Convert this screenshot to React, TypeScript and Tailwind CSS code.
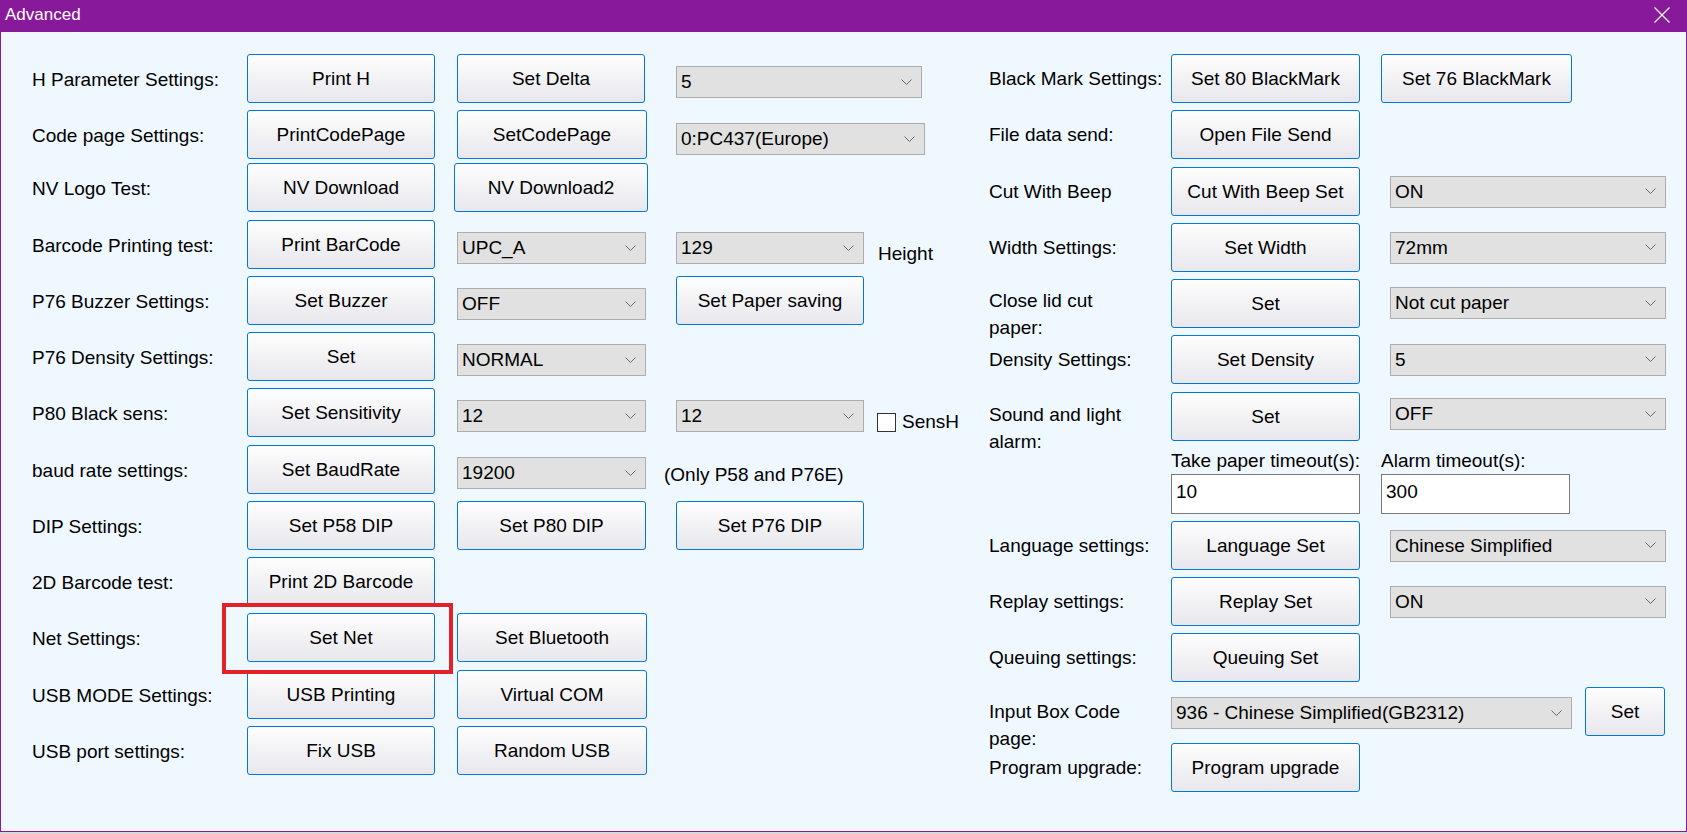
import React from "react";

const btnBase =
  "flex shrink-0 items-center justify-center h-[49px] pt-[2px] rounded-[3px] border border-[#0078d7] bg-linear-to-b from-[#fefefe] to-[#e7e7ed] text-black whitespace-nowrap";

function Btn({ label, w = "w-[188px]", className = "" }: { label: string; w?: string; className?: string }) {
  return (
    <button type="button" className={`${btnBase} ${w} ${className}`}>
      {label}
    </button>
  );
}

function Chevron() {
  return (
    <svg width="11" height="7" viewBox="0 0 11 7" className="shrink-0">
      <polyline points="0.5,0.5 5.5,5.5 10.5,0.5" fill="none" stroke="#6a6a6a" strokeWidth="1" />
    </svg>
  );
}

function Combo({ value, w, className = "" }: { value: string; w: string; className?: string }) {
  return (
    <div
      className={`flex h-[32px] shrink-0 items-center justify-between border border-[#adadad] bg-[#e1e1e1] pl-[4px] pr-[9px] ${w} ${className}`}
    >
      <span className="whitespace-nowrap pt-[1px]">{value}</span>
      <Chevron />
    </div>
  );
}

function TextBox({ value }: { value: string }) {
  return (
    <div className="flex h-[40px] w-[189px] shrink-0 items-start border border-[#7a7a7a] bg-white pl-[4px] pt-[3px]">
      {value}
    </div>
  );
}

/* ---------- left settings column ---------- */

function LRow({
  label,
  c1,
  c2,
  c3,
  c3Class = "ml-[29px]",
  className = "",
}: {
  label: string;
  c1?: React.ReactNode;
  c2?: React.ReactNode;
  c3?: React.ReactNode;
  c3Class?: string;
  className?: string;
}) {
  return (
    <div className={`flex h-[49px] items-center ${className}`}>
      <div className="w-[215px] shrink-0 whitespace-nowrap pt-[4px]">{label}</div>
      <div className="flex w-[188px] shrink-0 items-center">{c1}</div>
      <div className="ml-[22px] flex w-[190px] shrink-0 items-center">{c2}</div>
      {c3 && <div className={`flex items-center ${c3Class}`}>{c3}</div>}
    </div>
  );
}

function LeftPanel() {
  return (
    <div className="flex w-[988px] shrink-0 flex-col gap-[7px] pl-[31px] pt-[22px]">
      <LRow
        label="H Parameter Settings:"
        c1={<Btn label="Print H" />}
        c2={<Btn label="Set Delta" w="w-[188px]" />}
        c3={<Combo value="5" w="w-[246px]" className="mt-[7px]" />}
      />
      <LRow
        label="Code page Settings:"
        c1={<Btn label="PrintCodePage" />}
        c2={<Btn label="SetCodePage" w="w-[190px]" />}
        c3={<Combo value="0:PC437(Europe)" w="w-[249px]" className="mt-[9px]" />}
      />
      <LRow
        className="-mt-[3px]"
        label="NV Logo Test:"
        c1={<Btn label="NV Download" />}
        c2={<Btn label="NV Download2" w="w-[194px]" className="-ml-[3px]" />}
      />
      <LRow
        className="mt-[1px]"
        label="Barcode Printing test:"
        c1={<Btn label="Print BarCode" />}
        c2={<Combo value="UPC_A" w="w-[189px]" className="mt-[7px]" />}
        c3={
          <>
            <Combo value="129" w="w-[188px]" className="mt-[7px]" />
            <span className="ml-[14px] pt-[19px]">Height</span>
          </>
        }
      />
      <LRow
        label="P76 Buzzer Settings:"
        c1={<Btn label="Set Buzzer" />}
        c2={<Combo value="OFF" w="w-[189px]" className="mt-[7px]" />}
        c3={<Btn label="Set Paper saving" w="w-[188px]" />}
      />
      <LRow
        label="P76 Density Settings:"
        c1={<Btn label="Set" />}
        c2={<Combo value="NORMAL" w="w-[189px]" className="mt-[7px]" />}
      />
      <LRow
        label="P80 Black sens:"
        c1={<Btn label="Set Sensitivity" />}
        c2={<Combo value="12" w="w-[189px]" className="mt-[7px]" />}
        c3={
          <>
            <Combo value="12" w="w-[188px]" className="mt-[7px]" />
            <span className="ml-[13px] mt-[20px] h-[19px] w-[19px] shrink-0 border border-[#333333] bg-white" />
            <span className="ml-[6px] mt-[20px] whitespace-nowrap">SensH</span>
          </>
        }
      />
      <LRow
        className="mt-[1px]"
        label="baud rate settings:"
        c1={<Btn label="Set BaudRate" />}
        c2={<Combo value="19200" w="w-[189px]" className="mt-[7px]" />}
        c3={<span className="whitespace-nowrap pt-[12px]">(Only P58 and P76E)</span>}
        c3Class="ml-[17px]"
      />
      <LRow
        label="DIP Settings:"
        c1={<Btn label="Set P58 DIP" />}
        c2={<Btn label="Set P80 DIP" w="w-[189px]" />}
        c3={<Btn label="Set P76 DIP" w="w-[188px]" />}
      />
      <LRow label="2D Barcode test:" c1={<Btn label="Print 2D Barcode" />} />
      <LRow
        label="Net Settings:"
        c1={
          <div className="relative">
            <Btn label="Set Net" />
            <div className="pointer-events-none absolute -bottom-[12px] -left-[25px] -right-[18px] -top-[10px] border-4 border-[#e3212b]" />
          </div>
        }
        c2={<Btn label="Set Bluetooth" w="w-[190px]" />}
      />
      <LRow
        className="mt-[1px]"
        label="USB MODE Settings:"
        c1={<Btn label="USB Printing" />}
        c2={<Btn label="Virtual COM" w="w-[190px]" />}
      />
      <LRow label="USB port settings:" c1={<Btn label="Fix USB" />} c2={<Btn label="Random USB" w="w-[190px]" />} />
    </div>
  );
}

/* ---------- right settings column ---------- */

function RRow({
  label,
  children,
  twoLine = false,
  labelPad = "pt-[9px]",
  className = "",
}: {
  label: React.ReactNode;
  children?: React.ReactNode;
  twoLine?: boolean;
  labelPad?: string;
  className?: string;
}) {
  return (
    <div className={`flex h-[49px] ${twoLine ? "items-start" : "items-center"} ${className}`}>
      <div className={`w-[182px] shrink-0 whitespace-nowrap ${twoLine ? `${labelPad} leading-[27px]` : "pt-[2px]"}`}>
        {label}
      </div>
      {children}
    </div>
  );
}

function RightPanel() {
  return (
    <div className="flex flex-1 flex-col gap-[7px] pt-[22px]">
      <RRow label="Black Mark Settings:">
        <Btn label="Set 80 BlackMark" w="w-[189px]" />
        <Btn label="Set 76 BlackMark" w="w-[191px]" className="ml-[21px]" />
      </RRow>
      <RRow label="File data send:">
        <Btn label="Open File Send" w="w-[189px]" />
      </RRow>
      <RRow label="Cut With Beep" className="mt-[1px]">
        <Btn label="Cut With Beep Set" w="w-[189px]" />
        <Combo value="ON" w="w-[276px]" className="ml-[30px]" />
      </RRow>
      <RRow label="Width Settings:">
        <Btn label="Set Width" w="w-[189px]" />
        <Combo value="72mm" w="w-[276px]" className="ml-[30px]" />
      </RRow>
      <RRow
        twoLine
        labelPad="pt-[8px]"
        label={
          <>
            Close lid cut
            <br />
            paper:
          </>
        }
      >
        <Btn label="Set" w="w-[189px]" />
        <Combo value="Not cut paper" w="w-[276px]" className="ml-[30px] mt-[8px]" />
      </RRow>
      <RRow label="Density Settings:">
        <Btn label="Set Density" w="w-[189px]" />
        <Combo value="5" w="w-[276px]" className="ml-[30px]" />
      </RRow>
      <RRow
        twoLine
        className="mt-[1px]"
        labelPad="pt-[9px]"
        label={
          <>
            Sound and light
            <br />
            alarm:
          </>
        }
      >
        <Btn label="Set" w="w-[189px]" />
        <Combo value="OFF" w="w-[276px]" className="ml-[30px] mt-[6px]" />
      </RRow>

      {/* timeout inputs */}
      <div className="flex pl-[182px]">
        <div className="flex w-[189px] shrink-0 flex-col">
          <span className="whitespace-nowrap leading-[26px]">Take paper timeout(s):</span>
          <TextBox value="10" />
        </div>
        <div className="ml-[21px] flex flex-col">
          <span className="whitespace-nowrap leading-[26px]">Alarm timeout(s):</span>
          <TextBox value="300" />
        </div>
      </div>

      <RRow label="Language settings:">
        <Btn label="Language Set" w="w-[189px]" />
        <Combo value="Chinese Simplified" w="w-[276px]" className="ml-[30px]" />
      </RRow>
      <RRow label="Replay settings:">
        <Btn label="Replay Set" w="w-[189px]" />
        <Combo value="ON" w="w-[276px]" className="ml-[30px]" />
      </RRow>
      <RRow label="Queuing settings:">
        <Btn label="Queuing Set" w="w-[189px]" />
      </RRow>
      <RRow
        twoLine
        className="-mt-[2px]"
        labelPad="pt-[11px]"
        label={
          <>
            Input Box Code
            <br />
            page:
          </>
        }
      >
        <Combo value="936 - Chinese Simplified(GB2312)" w="w-[401px]" className="mt-[10px]" />
        <Btn label="Set" w="w-[80px]" className="ml-[13px]" />
      </RRow>
      <RRow label="Program upgrade:">
        <Btn label="Program upgrade" w="w-[189px]" />
      </RRow>
    </div>
  );
}

export default function App() {
  return (
    <div className="h-[834px] w-[1687px] overflow-hidden bg-[#d8d8dc] font-['Liberation_Sans',Arial,sans-serif] text-[19px] text-black">
      <div className="flex h-[832px] flex-col">
        {/* title bar */}
        <div className="flex h-[32px] shrink-0 items-center justify-between bg-[#87199a] pl-[5px] pr-[17px] text-white">
          <span className="pb-[2px] text-[17px]">Advanced</span>
          <svg width="16" height="16" viewBox="0 0 16 16" className="mb-[3px]">
            <path d="M0.5 0.5 L15.5 15.5 M15.5 0.5 L0.5 15.5" stroke="#ffffff" strokeWidth="1.2" fill="none" />
          </svg>
        </div>
        {/* dialog body */}
        <div className="flex flex-1 border-x border-b border-[#87199a] bg-[#eff7ff]">
          <LeftPanel />
          <RightPanel />
        </div>
      </div>
    </div>
  );
}
